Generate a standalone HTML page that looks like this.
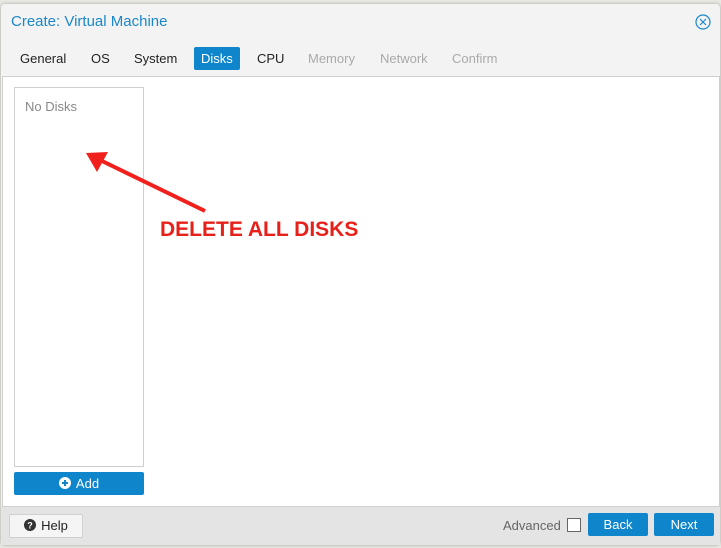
<!DOCTYPE html>
<html><head><style>
body{margin:0;width:721px;height:548px;background:#e8e8e2;font-family:"Liberation Sans",sans-serif;position:relative;overflow:hidden}
.win{position:absolute;left:1px;top:4px;width:719px;height:541px;background:#f3f3f3;border-radius:4px;box-shadow:0 0 3px rgba(0,0,0,.3)}
.title{position:absolute;left:10px;top:9px;font-size:15px;color:#1b87c9}
.close{position:absolute;left:694px;top:10px}
.tab{position:absolute;top:47px;font-size:13px;color:#222}
.dis{color:#aaa}
.sel{background:#0f85cc;color:#fff;padding:4px 7px;border-radius:2px;top:43px}
.body{position:absolute;left:1px;top:72px;width:716px;height:429px;background:#fff;border:1px solid #cfcfcf}
.list{position:absolute;left:11px;top:10px;width:128px;height:378px;border:1px solid #cfcfcf;font-size:13px;color:#888}
.add{position:absolute;left:11px;top:395px;width:130px;height:23px;background:#0f85cc;border-radius:2px;color:#fff;font-size:13px;text-align:center;line-height:23px}
.foot{position:absolute;left:0;top:503px;width:719px;height:38px;background:#e4e4e4}
.btn{position:absolute;height:22px;border-radius:2px;font-size:13px;line-height:22px;text-align:center}
</style></head><body>
<div class="win">
<div class="title">Create: Virtual Machine</div>
<svg class="close" width="16" height="16" viewBox="0 0 16 16"><circle cx="8" cy="8" r="7" fill="none" stroke="#1b87c9" stroke-width="1.2"/><path d="M5 5L11 11M11 5L5 11" stroke="#1b87c9" stroke-width="1.2"/></svg>
<div class="tab" style="left:19px">General</div>
<div class="tab" style="left:90px">OS</div>
<div class="tab" style="left:133px">System</div>
<div class="tab sel" style="left:193px">Disks</div>
<div class="tab" style="left:256px">CPU</div>
<div class="tab dis" style="left:307px">Memory</div>
<div class="tab dis" style="left:379px">Network</div>
<div class="tab dis" style="left:451px">Confirm</div>
<div class="body">
<div class="list"><div style="position:absolute;left:10px;top:11px">No Disks</div></div>
<div class="add"><svg width="12" height="12" viewBox="0 0 12 12" style="vertical-align:-1px;margin-right:5px"><circle cx="6" cy="6" r="6" fill="#fff"/><path d="M6 3V9M3 6H9" stroke="#0f85cc" stroke-width="2"/></svg>Add</div>
</div>
<div class="foot">
<div class="btn" style="left:8px;top:7px;width:72px;background:#f5f5f5;border:1px solid #d0d0d0;color:#222"><svg width="12" height="12" viewBox="0 0 12 12" style="vertical-align:-1px;margin-right:5px"><circle cx="6" cy="6" r="6" fill="#333"/><text x="6" y="9.5" font-size="9" font-weight="bold" fill="#fff" text-anchor="middle" font-family="Liberation Sans">?</text></svg>Help</div>
<div style="position:absolute;left:502px;top:11px;font-size:13px;color:#666">Advanced</div>
<div style="position:absolute;left:566px;top:11px;width:12px;height:12px;background:#fff;border:1px solid #666"></div>
<div class="btn" style="left:587px;top:6px;width:60px;height:23px;line-height:23px;background:#0f85cc;color:#fff">Back</div>
<div class="btn" style="left:653px;top:6px;width:60px;height:23px;line-height:23px;background:#0f85cc;color:#fff">Next</div>
</div>
</div>
<svg style="position:absolute;left:0;top:0" width="721" height="548"><line x1="205" y1="211" x2="100" y2="160" stroke="#f0201c" stroke-width="4"/><polygon points="86,153 108,152 97,172" fill="#f0201c"/></svg>
<div style="position:absolute;left:160px;top:218px;font-size:21px;font-weight:bold;color:#e8201a">DELETE ALL DISKS</div>
</body></html>
